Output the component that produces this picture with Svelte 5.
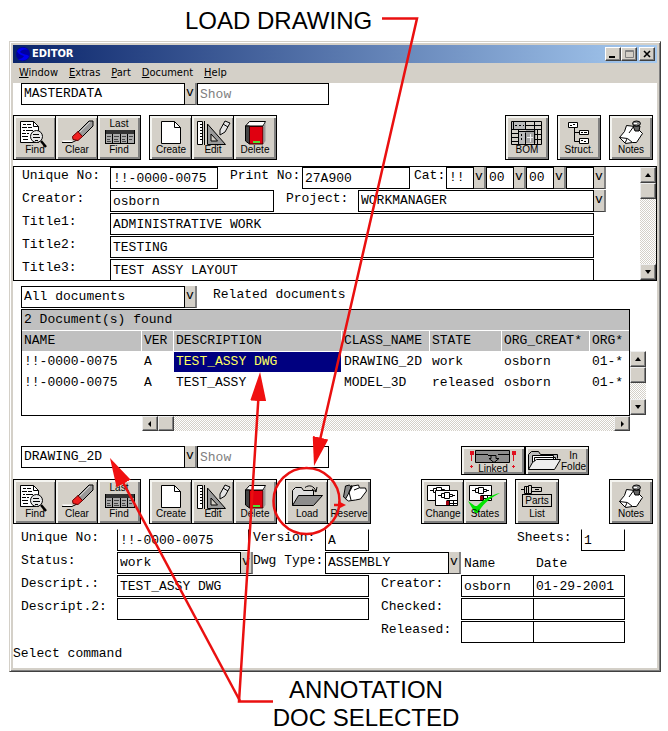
<!--
  Editor window with the two callouts used on the help page: where to load
  a drawing from, and which rows show that the annotation doc is selected.
-->
<script lang="ts">
	interface Tool {
		icon: string;
		label: string;
		top?: string;
	}

	const findTools: Tool[] = [
		{ icon: 'find', label: 'Find' },
		{ icon: 'clear', label: 'Clear' },
		{ icon: 'last', label: 'Find', top: 'Last' }
	];
	const editTools: Tool[] = [
		{ icon: 'create', label: 'Create' },
		{ icon: 'edit', label: 'Edit' },
		{ icon: 'delete', label: 'Delete' }
	];
	const loadTools: Tool[] = [
		{ icon: 'load', label: 'Load' },
		{ icon: 'reserve', label: 'Reserve' }
	];
	const stateTools: Tool[] = [
		{ icon: 'change', label: 'Change' },
		{ icon: 'states', label: 'States' }
	];

	const menus = ['Window', 'Extras', 'Part', 'Document', 'Help'];
	const columns = ['NAME', 'VER', 'DESCRIPTION', 'CLASS_NAME', 'STATE', 'ORG_CREAT*', 'ORG*'];
	const documents = [
		['!!-0000-0075', 'A', 'TEST_ASSY DWG', 'DRAWING_2D', 'work', 'osborn', '01-*'],
		['!!-0000-0075', 'A', 'TEST_ASSY', 'MODEL_3D', 'released', 'osborn', '01-*']
	];
	const titles = ['ADMINISTRATIVE WORK', 'TESTING', 'TEST ASSY LAYOUT'];
	const categories = ['!!', '00', '00', ''];

	let selected = $state(0);
</script>

{#snippet combo(id: string, value: string, label: string | null, cls: string)}
	<span class="combo {cls}">
		<select {id} aria-label={label}>
			<option>{value}</option>
		</select>
		<span class="drop" aria-hidden="true">v</span>
	</span>
{/snippet}

{#snippet card(x: number, y: number)}
	<g transform="translate({x} {y})">
		<path d="M.5.5h22v15h-22z" fill="#fff" stroke="#000" />
		<path d="M3 5.500h3M6.500 3.500h3v4h-3zM9.500 2.500h5v6h-5zM14.500 4.500h3v2h-3zM17 5.500h3" fill="none" stroke="#000" />
		<path d="M11.500 10.500h11M14.500 10.500v5M18.500 10.500v5M14.500 13.500h8" stroke="#000" fill="none" />
		<path d="M11 11h3v4h-3z" fill="#a00010" />
	</g>
{/snippet}

{#snippet icon(name: string)}
	<svg class="icon" class:short={name === 'last'} width="38" height={name === 'last' ? 15 : 26} aria-hidden="true">
		{#if name === 'find'}
			<path d="M4.500 3.500h13l5 5v16h-18z" fill="#fff" stroke="#000" />
			<path d="M17.500 3.500v5h5" fill="none" stroke="#000" />
			<path d="M7 6.500h3m1 0h4M6 9.500h5m1 0h4M7 12.500h2m1 0h7M6 15.500h4m1 0h2M6 18.500h6M7 21.500h5" stroke="#000" />
			<circle cx="20.500" cy="18.500" r="6" fill="#e8e8e8" stroke="#000" />
			<path d="M17 16.500h6M17 19.500h7M19 22.500h3" stroke="#000" />
			<path d="M25 23l5 6" stroke="#000" stroke-width="2.500" />
		{:else if name === 'clear'}
			<path d="M4 22.500h9l3 2H6z" fill="#fff" />
			<path d="M4 24.500h10l6-3" fill="none" stroke="#000" />
			<path d="M20 14L31 3l4 0v5L24 19z" fill="#9a9a9a" stroke="#000" />
			<path d="M21 15L32 4" stroke="#d0d0d0" />
			<path d="M20 13.500l4.500 5-4.500 4-5-1-.5-3z" fill="#f02020" stroke="#600" />
		{:else if name === 'last'}
			<path d="M5 1h30v14H5z" fill="#aaa" />
			<path d="M5 1h30v4H5z" fill="#333" />
			<path d="M5.500 1v14M12.500 5v10M20.500 5v10M27.500 5v10M34.500 1v14M5 14.500h30" stroke="#000" />
			<path d="M7 7.500h4m3 0h5m3 0h4m3 0h4M7 10.500h3m4 0h4m4 0h3m4 0h3M7 12.500h4m3 0h5m3 0h4" stroke="#444" />
		{:else if name === 'create'}
			<path d="M9.500 3.500h13l6 6v16h-19z" fill="#fff" stroke="#000" />
			<path d="M22.500 3.500v6h6" fill="none" stroke="#000" />
		{:else if name === 'edit'}
			<path d="M3.500 3.500h5v23h-5z" fill="#fff" stroke="#000" />
			<path d="M6 6.500h2M6 9.500h2M6 12.500h2M6 15.500h2M6 18.500h2M6 21.500h2" stroke="#000" />
			<path d="M10.500 3v24" stroke="#000" />
			<path d="M13.500 6v20.500h18z" fill="#999" stroke="#000" />
			<path d="M17 16v7h6.500z" fill="#d4d0c8" stroke="#000" />
			<path d="M26 12l5-9 5 2-5 9-5 3z" fill="#e4e4e4" stroke="#000" />
			<path d="M29 6l5 3" stroke="#000" />
		{:else if name === 'delete'}
			<path d="M9.500 8l4-4.500h16L27 8z" fill="#fff" stroke="#000" />
			<path d="M9.500 8h4v18l-4-3z" fill="#444" stroke="#000" />
			<path d="M13.500 8.500H27v17.500H13.500z" fill="#e00010" stroke="#300" />
			<path d="M27.500 8l2-4v19l-2 3z" fill="#999" />
			<path d="M17 23h7v2h-7z" fill="#50e030" />
		{:else if name === 'bom'}
			<path d="M3 3h31v24H3z" fill="#d4d0c8" />
			<path d="M4 4h13v7H4z M11 13h7v13h-7z" fill="#bbb" />
			<path d="M18 12h10v13H18z" fill="#a4a4a4" />
			<path d="M3.500 3.500h30v23h-30zM3.500 11.500h30M17.500 3.500v8M26.500 3.500v23M10.500 11.500v15M5.500 3.500v8M17 7.500h17M17.500 14.500v12M3.500 15.500h7M3.500 19.500h7M3.500 23.500h7M29.500 11.500v15M26.500 16.500h7M26.500 21.500h7M10.500 13.500h16" fill="none" stroke="#000" />
			<path d="M7 7.500h2m2 0h2m2 0h1M13.500 16v2m0 2v2" stroke="#000" />
			<path d="M19 19.500h6M22.500 16v8" stroke="#eee" />
		{:else if name === 'struct'}
			<path d="M14.500 9v14.500h5M14.500 14.500h5" fill="none" stroke="#000" />
			<path d="M8.500 4.500h9v5h-9zM19.500 12.500h9v4h-9zM19.500 20.500h9v5h-9z" fill="#fff" stroke="#000" />
			<path d="M10 7.500h2m1-1h2M21 14.500h2m1 0h3M21 22.500h2m1 1h2" stroke="#000" />
		{:else if name === 'notes'}
			<path d="M14.500 7.500l9 1 7 7-6 9-4 0-7 1-6-6 5-6z" fill="#fff" stroke="#000" />
			<path d="M7.500 19.500l8 1 5 4M15 21l-2 4" fill="none" stroke="#000" />
			<path d="M22 8l-5 7" stroke="#000" />
			<path d="M21 8h7l-1 5h-4z" fill="#666" stroke="#000" />
			<ellipse cx="24.500" cy="5.500" rx="4" ry="2.500" fill="#888" stroke="#000" />
			<path d="M22 5.500h3" stroke="#fff" />
		{:else if name === 'load'}
			<path d="M4.500 23.500v-15l3-3h6l2 3h10v5" fill="#ddd" stroke="#000" />
			<path d="M10.500 13.500h24l-9 10h-21z" fill="#8c8c8c" stroke="#000" />
			<path d="M17 5.500c4-3 9-2 11 4" fill="none" stroke="#000" />
			<path d="M24 7l4 3 1-5" fill="none" stroke="#000" />
		{:else if name === 'reserve'}
			<path d="M13.500 15l2-11 4-1 3 4-6 10z" fill="#888" stroke="#000" />
			<path d="M15.500 17l5-9 2-4 6-1 1 3 6 0 1 3-6 8-5 1-7 1z" fill="#fff" stroke="#000" />
			<path d="M22 3l-3 7 2 8M29 6l-5 2" fill="none" stroke="#000" />
		{:else if name === 'change'}
			{@render card(3, 3)}
			{@render card(11, 8)}
		{:else if name === 'states'}
			{@render card(3, 3)}
			<path d="M2 19l7 5 2 0C18 17 25 13 34 11 24 16 16 23 12 31H9z" fill="#00e400" />
		{/if}
	</svg>
{/snippet}

{#snippet tool(t: Tool)}
	<button type="button" class="tool">
		{#if t.top}<span>{t.top}</span>{/if}
		{@render icon(t.icon)}
		<span>{t.label}</span>
	</button>
{/snippet}

{#snippet group(tools: Tool[])}
	<div class="group">
		{#each tools as t}{@render tool(t)}{/each}
	</div>
{/snippet}

{#snippet scrollbar(dir: 'vertical' | 'horizontal', cls: string)}
	<div class="scrollbar {dir} {cls}">
		<button type="button" aria-label="Scroll back">
			<svg width="8" height="8" aria-hidden="true">
				<path d={dir === 'vertical' ? 'M1 6l3-4 3 4z' : 'M5 1v6L2 4z'} />
			</svg>
		</button>
		<div class="thumb"></div>
		<button type="button" class="end" aria-label="Scroll forward">
			<svg width="8" height="8" aria-hidden="true">
				<path d={dir === 'vertical' ? 'M1 2l3 4 3-4z' : 'M3 1v6l3-3z'} />
			</svg>
		</button>
	</div>
{/snippet}

<main class="figure">
	<p class="callout callout-top">LOAD DRAWING</p>

	<section class="window">
		<header class="titlebar">
			<svg width="18" height="18" aria-hidden="true">
				<circle cx="9" cy="9" r="7" fill="#0000a0" />
				<path d="M3 6c3-4 8-4 11-1-4-1-7 0-8 2 3 3 7 2 9 4-1 4-7 6-11 3 3 0 5-1 6-3-3-1-6-2-7-5z" fill="#0000f0" />
			</svg>
			<h1>EDITOR</h1>
			<button type="button" aria-label="Minimize">
				<svg width="12" height="10" aria-hidden="true"><path d="M2 7h6v2H2z" /></svg>
			</button>
			<button type="button" aria-label="Maximize">
				<svg width="12" height="10" aria-hidden="true">
					<path d="M2.500 1.500h8v7h-8zM2 2.500h8" fill="none" stroke="#808080" />
				</svg>
			</button>
			<button type="button" class="close" aria-label="Close">
				<svg width="12" height="10" aria-hidden="true">
					<path d="M3 2l6 6M9 2L3 8" stroke="#000" stroke-width="1.600" />
				</svg>
			</button>
		</header>

		<nav class="menubar">
			{#each menus as menu}
				<button type="button"><u>{menu[0]}</u>{menu.slice(1)}</button>
			{/each}
		</nav>

		<div class="picker">
			{@render combo('part-class', 'MASTERDATA', 'Part class', 'wide')}
			<input class="show" placeholder="Show" aria-label="Show part" />
		</div>

		<div class="toolbar toolbar-part">
			{@render group(findTools)}
			{@render group(editTools)}
			<div class="push">{@render tool({ icon: 'bom', label: 'BOM' })}</div>
			{@render tool({ icon: 'struct', label: 'Struct.' })}
			{@render tool({ icon: 'notes', label: 'Notes' })}
		</div>

		<div class="part">
			<div class="part-fields">
				<div class="row">
					<label class="lead" for="part-no">Unique No:</label>
					<input id="part-no" class="grow" value="!!-0000-0075" />
					<label class="mid" for="print-no">Print No:</label>
					<input id="print-no" class="grow" value="27A900" />
					<label class="cat" for="cat-0">Cat:</label>
					{#each categories as c, i}
						{@render combo(`cat-${i}`, c, i ? `Category ${i + 1}` : null, 'tiny')}
					{/each}
				</div>
				<div class="row">
					<label class="lead" for="creator">Creator:</label>
					<input id="creator" class="creator" value="osborn" />
					<label class="mid" for="project">Project:</label>
					{@render combo('project', 'WORKMANAGER', null, 'grow')}
				</div>
				{#each titles as title, i}
					<div class="row title-row">
						<label class="lead" for="title-{i}">Title{i + 1}:</label>
						<input id="title-{i}" class="grow" value={title} />
					</div>
				{/each}
			</div>
			{@render scrollbar('vertical', '')}
		</div>

		<div class="picker picker-docs">
			{@render combo('doc-filter', 'All documents', null, 'wide')}
			<label class="related" for="doc-filter">Related documents</label>
		</div>

		<div class="results">
			<div class="results-main">
				<div class="table-box">
					<table>
						<colgroup>
							<col class="c-name" /><col class="c-ver" /><col /><col class="c-class" />
							<col class="c-state" /><col class="c-class" /><col class="c-org" />
						</colgroup>
						<thead>
							<tr><th colspan="7">2 Document(s) found</th></tr>
							<tr>
								{#each columns as column}<th scope="col">{column}</th>{/each}
							</tr>
						</thead>
						<tbody>
							{#each documents as doc, i}
								<tr onclick={() => (selected = i)}>
									{#each doc as value, c}
										<td class:selected={selected === i && c === 2}>{value}</td>
									{/each}
								</tr>
							{/each}
						</tbody>
					</table>
				</div>
				{@render scrollbar('horizontal', 'results-x')}
			</div>
			{@render scrollbar('vertical', 'results-y')}
		</div>

		<div class="picker picker-drawing">
			{@render combo('doc-class', 'DRAWING_2D', 'Document class', 'wide')}
			<input class="show" placeholder="Show" aria-label="Show document" />
			<div class="links">
				<button type="button" class="link-btn linked">
					<svg width="58" height="15" aria-hidden="true">
						<path d="M11.500 2.500h34v12h-34z" fill="#8c8c8c" stroke="#000" />
						<path d="M12 6.500h12m10 0h12M24 7.500h8v3h3l-5 4-5-4h2v-3" fill="none" stroke="#000" />
						<path d="M7.500 3v10M49.500 3v10" stroke="#e01020" />
						<path d="M6 3h4v4H6zM48 3h4v4h-4z" fill="#e01020" />
						<path d="M6 18.500h3M7.500 17v3M48 18.500h3M49.500 17v3" stroke="#e01020" />
					</svg>
					<span>Linked</span>
				</button>
				<button type="button" class="link-btn">
					<svg width="33" height="23" aria-hidden="true">
						<path d="M.5 20.500v-15l3-3h7l2 3h17v4" fill="#bbb" stroke="#000" />
						<path d="M4.500 17V6.500h21V10M6.500 15V8.500h21V10" fill="#fff" stroke="#000" />
						<path d="M8.500 10.500h24l-6 10H.500l4-7z" fill="#eee" stroke="#000" />
					</svg>
					<span>In<br />Folde</span>
				</button>
			</div>
		</div>

		<div class="toolbar toolbar-doc">
			{@render group(findTools)}
			{@render group(editTools)}
			{@render group(loadTools)}
			<div class="push">{@render group(stateTools)}</div>
			<button type="button" class="tool parts">
				<svg width="38" height="13" aria-hidden="true">
					<path d="M3 7.500h3M6.500 4.500h4v7h-4zM10.500 3.500h3v8h-3zM13.500 5.500h10v4h-10zM17 7.500h4M8.500 5v6" fill="none" stroke="#000" />
				</svg>
				<span class="boxed">Parts</span>
				<span>List</span>
			</button>
			<div class="apart">{@render tool({ icon: 'notes', label: 'Notes' })}</div>
		</div>

		<div class="doc">
			<div class="row clipped">
				<label class="lead" for="doc-no">Unique No:</label>
				<input id="doc-no" class="grow" value="!!-0000-0075" />
				<label class="second gap" for="version">Version:</label>
				<input id="version" class="small" value="A" />
				<label class="sheets" for="sheets">Sheets:</label>
				<input id="sheets" class="small" value="1" />
			</div>
			<div class="row">
				<label class="lead" for="status">Status:</label>
				{@render combo('status', 'work', null, 'grow')}
				<label class="second" for="dwg-type">Dwg Type:</label>
				{@render combo('dwg-type', 'ASSEMBLY', null, 'type')}
				<span class="head name">Name</span>
				<span class="head date">Date</span>
			</div>
			<div class="row">
				<label class="lead" for="descript">Descript.:</label>
				<input id="descript" class="grow" value="TEST_ASSY DWG" />
				<label class="who" for="created-by">Creator:</label>
				<input id="created-by" class="name" value="osborn" />
				<input class="date" aria-label="Created on" value="01-29-2001" />
			</div>
			<div class="row">
				<label class="lead" for="descript-2">Descript.2:</label>
				<input id="descript-2" class="grow" />
				<label class="who" for="checked-by">Checked:</label>
				<input id="checked-by" class="name" />
				<input class="date" aria-label="Checked on" />
			</div>
			<div class="row last">
				<label class="who" for="released-by">Released:</label>
				<input id="released-by" class="name" />
				<input class="date" aria-label="Released on" />
			</div>
		</div>

		<p class="status">Select command</p>
	</section>

	<p class="callout callout-bottom">ANNOTATION<br />DOC SELECTED</p>

	<!-- Arrows lie over the window and must not swallow clicks. -->
	<svg class="arrows" width="668" height="731" aria-hidden="true">
		<defs>
			<marker id="head" markerUnits="userSpaceOnUse" markerWidth="30" markerHeight="16" refX="9" refY="8" orient="auto">
				<path d="M0 0l29 8-29 8z" fill="#f01010" />
			</marker>
		</defs>
		<g fill="none" stroke="#ea1010" stroke-width="2.500">
			<path d="M382 18.500h35L318.500 446.500" marker-end="url(#head)" />
			<path d="M273 701.500h-34L258.800 392" marker-end="url(#head)" />
			<path d="M240 701L119.400 475.600" marker-end="url(#head)" />
			<circle cx="306.500" cy="501" r="33" />
			<path d="M334 505h8" />
		</g>
		<path d="M338 501l8 4-8 4z" fill="#f01010" />
	</svg>
</main>

<style>
	:global(body) {
		margin: 0;
		background: #fff;
	}

	.figure {
		--face: #d4d0c8;
		--mono: 'Liberation Mono', 'Courier New', monospace;
		--ui: 'DejaVu Sans Condensed', Tahoma, sans-serif;
		position: relative;
		padding: 0 7px 0 9px;
		color: #000;
		font: 13px/18px var(--mono);
	}

	button,
	input,
	select {
		box-sizing: border-box;
		margin: 0;
		padding: 0;
		border-radius: 0;
		font: inherit;
		color: inherit;
	}
	svg {
		display: block;
		overflow: visible;
	}

	.callout {
		margin: 0;
		font: 24px/28px 'Liberation Sans', Arial, sans-serif;
	}
	.callout-top {
		padding: 7px 0 6px 176px;
	}
	.callout-bottom {
		padding: 4px 0 0 62px;
		text-align: center;
	}
	.arrows {
		position: absolute;
		top: 0;
		left: 0;
		pointer-events: none;
	}

	.window {
		padding: 3px;
		border: 1px solid;
		border-color: #d4d0c8 #404040 #404040 #d4d0c8;
		box-shadow:
			inset 1px 1px #fff,
			inset -1px -1px #808080,
			inset 0 0 0 3px var(--face);
	}

	.titlebar {
		display: flex;
		align-items: center;
		height: 18px;
		padding: 0 2px 0 1px;
		background: linear-gradient(90deg, #0a246a, #a6caf0);
	}
	h1 {
		flex: 1;
		margin: 0;
		font: bold 11px/18px var(--ui);
		color: #fff;
	}
	.titlebar button {
		width: 16px;
		height: 14px;
		padding: 1px;
		border: 1px solid;
		border-color: #fff #404040 #404040 #fff;
		background: var(--face);
		box-shadow: inset -1px -1px #808080;
	}
	.titlebar .close {
		margin-left: 2px;
	}

	.menubar {
		display: flex;
		gap: 11px;
		height: 20px;
		padding-left: 6px;
		background: var(--face);
		font: 11px/20px var(--ui);
	}
	.menubar button {
		border: 0;
		background: none;
	}

	input,
	select {
		height: 22px;
		min-width: 0;
		padding: 0 2px;
		border: 1px solid #000;
		background: #fff;
		appearance: none;
		outline: none;
	}
	input::placeholder {
		color: #808080;
		opacity: 1;
	}
	.combo {
		display: flex;
	}
	.combo select {
		flex: 1;
	}
	.drop {
		box-sizing: border-box;
		width: 12px;
		height: 22px;
		border-right: 2px solid #808080;
		border-bottom: 1px solid #404040;
		background: var(--face);
		line-height: 20px;
		text-align: center;
	}
	.wide {
		width: 176px;
	}
	.tiny {
		width: 40px;
	}
	.grow {
		flex: 1;
		width: 0;
	}

	.picker {
		display: flex;
		align-items: flex-start;
		padding-left: 8px;
	}
	.show {
		width: 132px;
	}
	.picker-docs {
		margin: 5px 0 1px;
	}
	.related {
		padding-left: 16px;
	}
	.picker-drawing {
		margin-top: 15px;
	}

	.toolbar {
		display: flex;
		gap: 8px;
		padding-right: 4px;
	}
	.toolbar-part {
		margin: 10px 0 6px;
	}
	.toolbar-doc {
		margin: 4px 0 5px;
	}
	.push {
		margin-left: auto;
	}
	.apart {
		margin-left: 42px;
	}
	.group {
		display: flex;
	}
	.group .tool + :global(.tool) {
		margin-left: -2px;
	}
	.tool,
	.link-btn {
		border: 1px solid #000;
		background: var(--face);
		box-shadow:
			inset 2px 2px #f4f4f0,
			inset -2px -2px #808080;
		font: 10px/11px 'Liberation Sans', Arial, sans-serif;
	}
	.tool {
		display: flex;
		flex-direction: column;
		align-items: center;
		width: 44px;
		height: 45px;
		padding-top: 2px;
	}
	.tool span {
		position: relative;
	}
	.boxed {
		padding: 0 2px;
		outline: 1px solid #000;
	}
	.parts span + span {
		padding-top: 2px;
	}

	.links {
		display: flex;
		margin: 0 68px 0 auto;
	}
	.link-btn {
		display: flex;
		align-items: center;
		width: 64px;
		height: 29px;
		padding: 0 2px;
	}
	.link-btn span {
		overflow: hidden;
	}
	.linked {
		flex-direction: column;
		padding-top: 1px;
	}

	.row {
		display: flex;
		height: 22px;
		margin-bottom: 1px;
	}
	.row label {
		white-space: nowrap;
	}

	.part {
		display: flex;
		border: 1px solid #000;
		border-bottom-width: 1px;
		overflow: hidden;
	}
	.part-fields {
		flex: 1;
		margin-bottom: -2px;
		padding: 0 34px 0 8px;
	}
	.part .lead {
		width: 88px;
	}
	.part .mid {
		width: 72px;
		padding-left: 12px;
	}
	.cat {
		width: 32px;
		padding-left: 4px;
	}
	.creator {
		width: 164px;
	}
	.title-row {
		padding-right: 12px;
	}

	.scrollbar {
		display: flex;
		background: repeating-conic-gradient(#d4d0c8 0 25%, #fff 0 50%) 0 0 / 2px 2px;
	}
	.scrollbar button,
	.thumb {
		box-sizing: border-box;
		display: grid;
		place-items: center;
		width: 16px;
		height: 16px;
		border: 1px solid;
		border-color: #eee #404040 #404040 #eee;
		background: var(--face);
		box-shadow: inset -1px -1px #808080;
	}
	.vertical {
		flex-direction: column;
		width: 16px;
	}
	.vertical .end {
		margin-top: auto;
	}
	.horizontal .end {
		margin-left: auto;
	}

	.results {
		display: flex;
		padding: 0 11px 0 8px;
	}
	.results-main {
		flex: 1;
	}
	.table-box {
		min-height: 105px;
		border: 1px solid #000;
	}
	.results-x {
		height: 15px;
		margin-left: 121px;
	}
	.results-x button,
	.results-x .thumb {
		height: 15px;
	}
	.results-y {
		height: 64px;
		margin-top: 42px;
	}
	table {
		width: 100%;
		table-layout: fixed;
		border-spacing: 0;
	}
	.c-name {
		width: 120px;
	}
	.c-ver {
		width: 32px;
	}
	.c-class {
		width: 88px;
	}
	.c-state {
		width: 72px;
	}
	.c-org {
		width: 39px;
	}
	th,
	td {
		box-sizing: border-box;
		height: 21px;
		padding: 0 0 0 2px;
		border: solid #fff;
		border-width: 0 1px 1px 0;
		font-weight: normal;
		line-height: 20px;
		text-align: left;
		white-space: nowrap;
	}
	th {
		background: #c0c0c0;
	}
	th:last-child {
		border-right: 0;
	}
	.selected {
		background: #000080;
		color: #ffff60;
	}

	.doc {
		padding: 0 32px 0 8px;
	}
	.doc .lead {
		width: 96px;
	}
	.clipped input {
		border-top-color: transparent;
	}
	.second {
		width: 72px;
	}
	.gap {
		margin-left: 4px;
	}
	.small {
		width: 44px;
	}
	.sheets {
		width: 64px;
		margin-left: 148px;
	}
	.type {
		width: 136px;
	}
	.name {
		width: 73px;
	}
	.date {
		width: 92px;
		margin-left: -1px;
	}
	.head {
		box-sizing: border-box;
		padding-left: 3px;
		line-height: 24px;
	}
	.who {
		width: 80px;
		padding-left: 12px;
	}
	.last {
		justify-content: flex-end;
	}

	.status {
		margin: 0;
		padding: 0 0 4px;
		line-height: 20px;
	}
</style>
